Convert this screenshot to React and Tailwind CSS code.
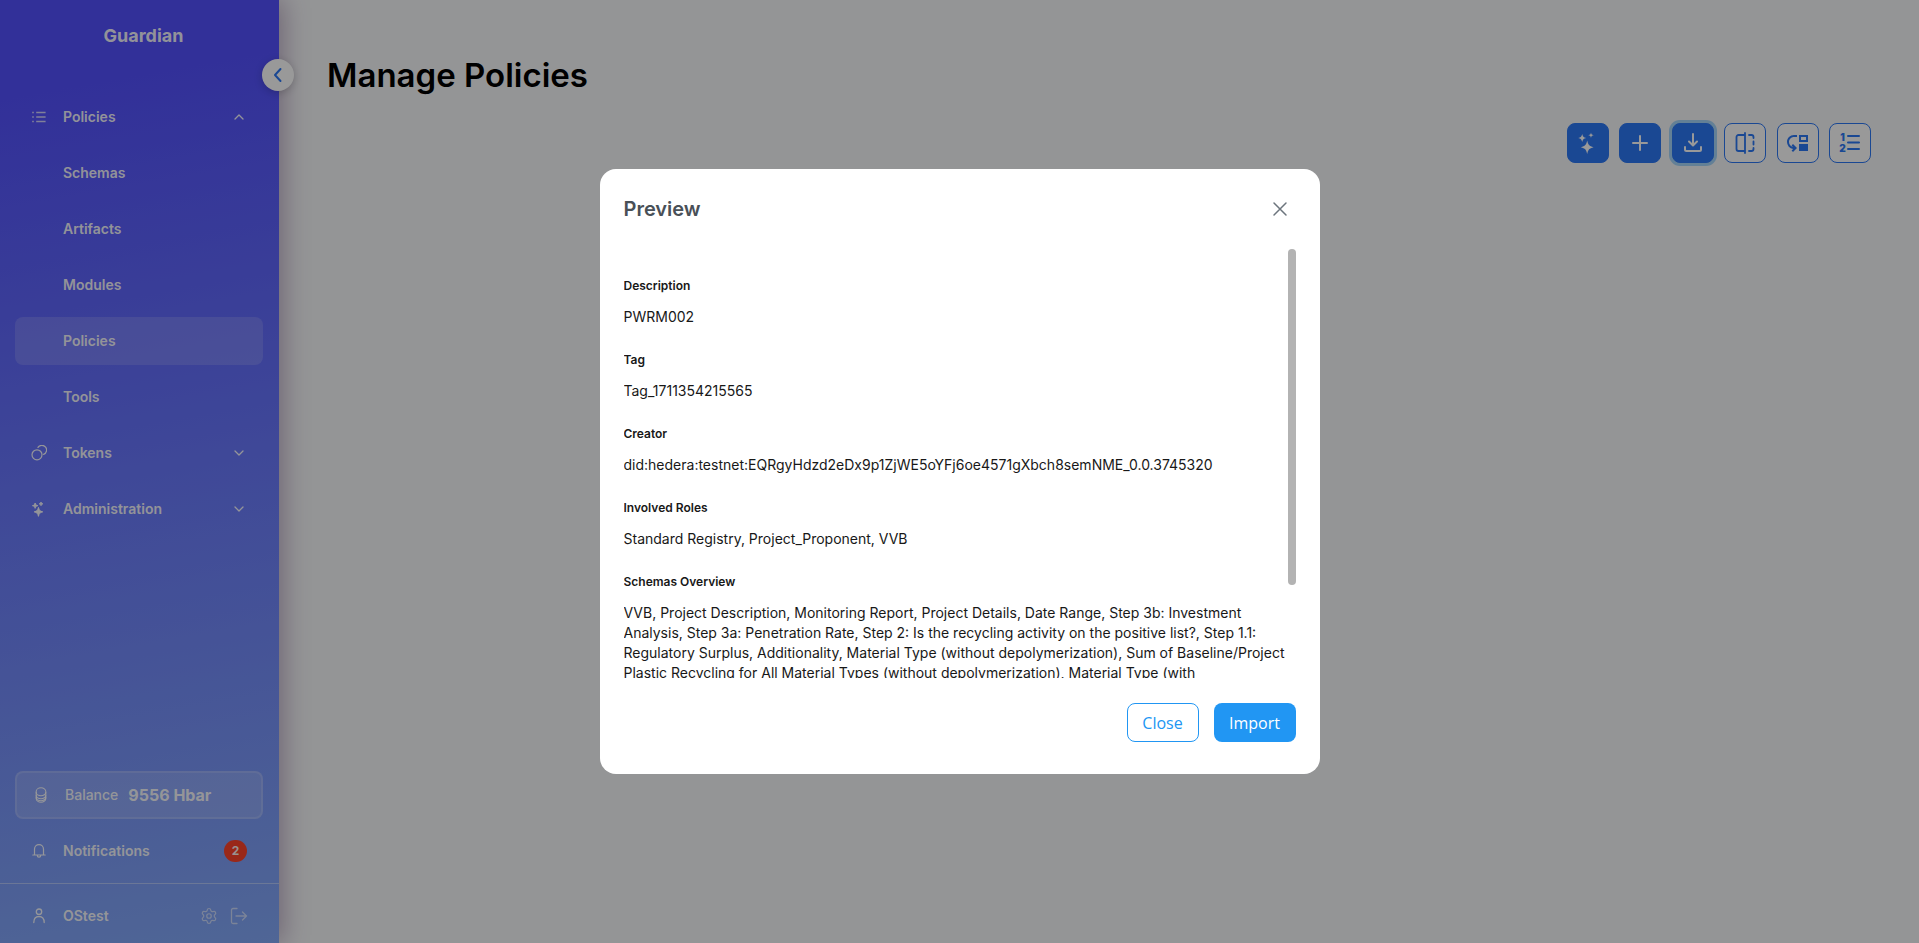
import React from "react";
import { Settings } from "lucide-react";
import { MdMoveDown } from "react-icons/md";

function Stroke({ size = 16, box = 16, width = 1, className = "", children }) {
  return (
    <svg
      width={size}
      height={size}
      viewBox={`0 0 ${box} ${box}`}
      fill="none"
      stroke="currentColor"
      strokeWidth={width}
      strokeLinecap="round"
      strokeLinejoin="round"
      className={`shrink-0 ${className}`}
      aria-hidden="true"
    >
      {children}
    </svg>
  );
}

const ListIcon = () => (
  <Stroke className="opacity-80">
    <path d="M1.2 3.5h1.6M1.2 8h1.6M1.2 12.5h1.6" strokeWidth="1.6" strokeLinecap="butt" />
    <path d="M5.2 3.5h9.4M5.2 8h9.4M5.2 12.5h9.4" strokeWidth="1.5" strokeLinecap="butt" />
  </Stroke>
);

const TokensIcon = () => (
  <Stroke width={1.2}>
    <circle cx="6" cy="9.8" r="5" />
    <path d="M7 2.4a4.7 4.7 0 1 1 5.6 7" />
  </Stroke>
);

const Sparkles = ({ size = 24, weight = 0 }) => (
  <svg
    width={size}
    height={size}
    viewBox="0 0 24 24"
    fill="currentColor"
    stroke="currentColor"
    strokeWidth={weight}
    strokeLinejoin="round"
    className="shrink-0"
    aria-hidden="true"
  >
    <path d="M11.2 9.6c1 4.400 2 5.600 6.400 6.700-4.400 1.100-5.400 2.300-6.400 6.700-1-4.400-2-5.600-6.400-6.700 4.400-1.100 5.400-2.300 6.400-6.700z" />
    <path d="M6.200 3c.6 2.600 1.300 3.300 4 4-2.700.7-3.400 1.400-4 4-.6-2.600-1.300-3.300-4-4 2.700-.7 3.400-1.400 4-4z" />
    <path d="M15 1.600c.4 1.800.9 2.300 2.700 2.700-1.800.4-2.300.9-2.700 2.700-.4-1.800-.9-2.300-2.700-2.700 1.800-.4 2.300-.9 2.700-2.700z" />
  </svg>
);

const Chevron = ({ up }) => (
  <Stroke size={16} width={1.3}>
    <path d={up ? "M4 10l4-4 4 4" : "M4 6l4 4 4-4"} />
  </Stroke>
);

const CoinsIcon = () => (
  <Stroke width={1.1}>
    <path d="M3.200 4.500a4.800 3.700 0 0 1 9.600 0v7a4.800 3.700 0 0 1-9.600 0z" />
    <path d="M3.200 5.500a4.800 3.200 0 0 0 9.600 0M3.200 8.500a4.800 3.200 0 0 0 9.600 0M3.200 10.500a4.800 3.200 0 0 0 9.600 0" />
  </Stroke>
);

const BellIcon = () => (
  <Stroke width={1.200}>
    <path d="M1.800 12h12.400M3.500 12V6.200a4.500 4.500 0 0 1 9 0V12M6.300 12.400a1.700 1.700 0 0 0 3.400 0" />
  </Stroke>
);

const UserIcon = () => (
  <Stroke width={1.300}>
    <circle cx="8" cy="3.700" r="2.700" />
    <path d="M2.800 14.500c0-4 2-6 5.200-6s5.200 2 5.200 6" />
  </Stroke>
);

const LogoutIcon = () => (
  <Stroke size={18} box={18} width={1.300}>
    <path d="M7 1.500H3a1.500 1.500 0 0 0-1.500 1.500v12A1.500 1.500 0 0 0 3 16.500h4M6 9h10.500M12.500 5l4 4-4 4" />
  </Stroke>
);

const PlusIcon = () => (
  <Stroke size={24} box={24} width={2}>
    <path d="M12 5v14M5 12h14" />
  </Stroke>
);

const DownloadIcon = () => (
  <Stroke size={24} box={24} width={2}>
    <path d="M12 3v11M8 10.500l4 4 4-4M4 16v2.500A1.500 1.500 0 0 0 5.500 20h13a1.500 1.500 0 0 0 1.500-1.500V16" />
  </Stroke>
);

const CompareIcon = () => (
  <Stroke size={24} box={24} width={1.800}>
    <path d="M12 4H5.500a2 2 0 0 0-2 2v12a2 2 0 0 0 2 2H12M12 2v20" />
    <path d="M16 4h2.500a2 2 0 0 1 2 2v1M20.500 10.500v3M16 20h2.500a2 2 0 0 0 2-2v-1" />
  </Stroke>
);

const NumberedIcon = () => (
  <svg width="24" height="24" viewBox="0 0 24 24" className="shrink-0 font-[Inter,sans-serif]" aria-hidden="true">
    <path d="M10 5h11M10 11.500h11M10 18h11" stroke="currentColor" strokeWidth="2" strokeLinecap="round" />
    <text x="4.500" y="10" fontSize="10" fontWeight="900" textAnchor="middle" fill="currentColor">1</text>
    <text x="4.500" y="20.500" fontSize="10" fontWeight="900" textAnchor="middle" fill="currentColor">2</text>
  </svg>
);

function NavGroup({ icon, label, open }) {
  return (
    <button className="flex h-12 w-full items-center rounded-lg px-4 text-left">
      <span className="flex w-8 items-center">{icon}</span>
      <span className="flex-1">{label}</span>
      <Chevron up={open} />
    </button>
  );
}

function NavLink({ label, active }) {
  return (
    <a href="#" className={`flex h-12 items-center rounded-lg pl-12 ${active ? "bg-white/15" : ""}`}>
      {label}
    </a>
  );
}

function Sidebar() {
  return (
    <aside className="relative z-10 flex w-[279px] shrink-0 flex-col bg-[linear-gradient(170deg,#5451ff_0%,#5451ff_10%,#8ab4fa_110%)] text-sm font-semibold text-white/95 shadow-[4px_0_24px_rgba(70,20,90,0.35)]">
      <div className="pl-2 pt-6 text-center text-lg/6 font-bold">Guardian</div>
      <button
        aria-label="Collapse menu"
        className="absolute -right-[15px] top-[59px] flex size-8 items-center justify-center rounded-full bg-white text-[#2c78f6] shadow-[0_2px_8px_rgba(0,0,0,0.2)]"
      >
        <Stroke width={2}>
          <path d="M10.500 2L5 8l5.500 6" />
        </Stroke>
      </button>
      <nav className="mt-[45px] flex flex-col gap-2 pl-[15px] pr-4">
        <NavGroup icon={<ListIcon />} label="Policies" open />
        <NavLink label="Schemas" />
        <NavLink label="Artifacts" />
        <NavLink label="Modules" />
        <NavLink label="Policies" active />
        <NavLink label="Tools" />
        <NavGroup icon={<TokensIcon />} label="Tokens" />
        <NavGroup icon={<Sparkles size={16} weight={1.500} />} label="Administration" />
      </nav>
      <div className="mt-auto flex flex-col gap-2 pb-2 pl-[15px] pr-4">
        <div className="flex h-12 items-center rounded-lg border-2 border-white/15 bg-white/15 pl-4">
          <span className="flex w-8 items-center">
            <CoinsIcon />
          </span>
          <span className="font-medium">Balance</span>
          <span className="ml-[10px] text-base font-bold">9556 Hbar</span>
        </div>
        <a href="#" className="flex h-12 items-center px-4">
          <span className="flex w-8 items-center">
            <BellIcon />
          </span>
          <span className="flex-1">Notifications</span>
          <span className="flex h-[22px] w-[23px] items-center justify-center rounded-full bg-[#ff432a] text-xs font-bold">2</span>
        </a>
      </div>
      <div className="flex h-[60px] items-center gap-3 border-t border-white/40 px-[31px] pt-[5px]">
        <span className="flex flex-1 items-center gap-4">
          <UserIcon />
          OStest
        </span>
        <button aria-label="Settings" className="text-white/60">
          <Settings size={18} strokeWidth={1.600} />
        </button>
        <button aria-label="Log out" className="text-white/60">
          <LogoutIcon />
        </button>
      </div>
    </aside>
  );
}

function ToolButton({ label, solid, focused, children }) {
  return (
    <button
      aria-label={label}
      className={`flex h-10 w-[42px] items-center justify-center rounded-lg border border-[#2c78f6] ${
        solid ? "bg-[#2c78f6] text-white" : "bg-white text-[#2c78f6]"
      } ${focused ? "shadow-[0_0_0_3px_#a6d5fa]" : ""}`}
    >
      {children}
    </button>
  );
}

const DETAILS = [
  ["Description", "PWRM002"],
  ["Tag", "Tag_1711354215565"],
  ["Creator", "did:hedera:testnet:EQRgyHdzd2eDx9p1ZjWE5oYFj6oe4571gXbch8semNME_0.0.3745320"],
  ["Involved Roles", "Standard Registry, Project_Proponent, VVB"],
  [
    "Schemas Overview",
    "VVB, Project Description, Monitoring Report, Project Details, Date Range, Step 3b: Investment Analysis, Step 3a: Penetration Rate, Step 2: Is the recycling activity on the positive list?, Step 1.1: Regulatory Surplus, Additionality, Material Type (without depolymerization), Sum of Baseline/Project Plastic Recycling for All Material Types (without depolymerization), Material Type (with depolymerization)",
  ],
];

function PreviewDialog() {
  return (
    <div
      role="dialog"
      aria-modal="true"
      aria-labelledby="preview-title"
      className="flex w-[720px] flex-col rounded-2xl bg-white px-6 pb-8"
    >
      <header className="flex h-20 items-center justify-between">
        <h2 id="preview-title" className="text-xl font-semibold text-[#495057]">
          Preview
        </h2>
        <button aria-label="Dismiss" className="flex size-8 items-center justify-center text-[#6c757d]">
          <Stroke width={1.500}>
            <path d="M2 2l12 12M14 2L2 14" />
          </Stroke>
        </button>
      </header>
      <div className="flex h-[429px]">
        <div className="flex-1 overflow-y-auto [scrollbar-width:none]">
          <dl className="flex flex-col gap-6 pb-20 pt-7 text-[#181818]">
            {DETAILS.map(([term, value]) => (
              <div key={term} className="flex flex-col gap-3">
                <dt className="text-xs/[18px] font-semibold">{term}</dt>
                <dd className="text-sm/5 font-normal">{value}</dd>
              </div>
            ))}
          </dl>
        </div>
        <div className="h-[336px] w-2 shrink-0 rounded-full bg-[#b3b3b3]" />
      </div>
      <footer className="mt-[25px] flex justify-end gap-[15px] font-['Open_Sans',sans-serif] text-base">
        <button className="h-[39px] w-[72px] rounded-lg border border-[#2196f3] text-[#2196f3]">Close</button>
        <button className="h-[39px] w-[82px] rounded-lg bg-[#2196f3] font-medium text-white">Import</button>
      </footer>
    </div>
  );
}

export default function App() {
  return (
    <div className="flex min-h-screen bg-[#f7f8fa] font-[Inter,sans-serif]">
      <Sidebar />
      <main className="flex flex-1 flex-col px-12 pt-[51px]">
        <h1 className="text-[33px]/[48px] font-semibold text-black">Manage Policies</h1>
        <div className="mt-6 flex w-[304px] justify-between self-end">
          <ToolButton label="Generate policy" solid>
            <Sparkles />
          </ToolButton>
          <ToolButton label="Create policy" solid>
            <PlusIcon />
          </ToolButton>
          <ToolButton label="Import policy" solid focused>
            <DownloadIcon />
          </ToolButton>
          <ToolButton label="Compare policies">
            <CompareIcon />
          </ToolButton>
          <ToolButton label="Migrate data">
            <MdMoveDown size={24} />
          </ToolButton>
          <ToolButton label="Show list">
            <NumberedIcon />
          </ToolButton>
        </div>
      </main>
      <div className="fixed inset-0 z-20 flex items-center justify-center bg-black/40">
        <PreviewDialog />
      </div>
    </div>
  );
}
